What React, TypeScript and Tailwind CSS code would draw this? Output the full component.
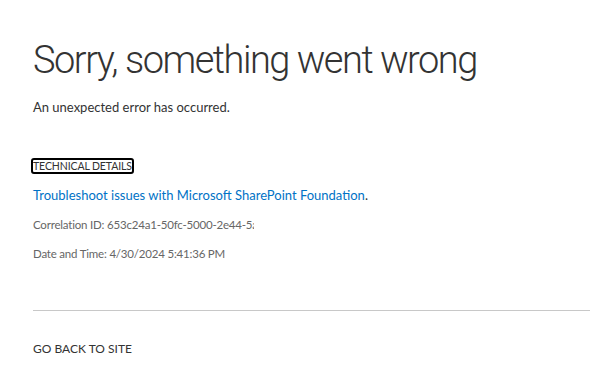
import React from 'react';

const Details = () => (
  <div className="mt-[40px] text-[13px]">
    <div className="flex">
      <span className="border-2 border-black rounded-[3px] leading-[12px] h-[16px] text-[10.5px] text-[#333] -ml-[2px] tracking-[-0.1px]">
        TECHNICAL DETAILS
      </span>
    </div>
    <p className="mt-[12px] text-[#0072c6]">
      Troubleshoot issues with Microsoft SharePoint Foundation<span className="text-[#333]">.</span>
    </p>
    <p className="mt-[11px] text-[11.5px] text-[#666] w-[221px] overflow-hidden whitespace-nowrap tracking-[-0.2px]">
      Correlation ID: 653c24a1-50fc-5000-2e44-5a7a1b3c9d0e
    </p>
    <p className="mt-[12px] text-[11.5px] text-[#666] tracking-[-0.2px]">Date and Time: 4/30/2024 5:41:36 PM</p>
  </div>
);

export default function App() {
  return (
    <div className="w-[590px] h-[392px] bg-white overflow-hidden pl-[33px] pt-[37px]" style={{ fontFamily: 'Lato, Arial, sans-serif' }}>
      <h1
        className="text-[38px] font-light text-[#333] leading-[46px] tracking-[-1.5px]"
        style={{ fontFamily: 'Roboto, Arial, sans-serif' }}
      >
        Sorry, something went wrong
      </h1>
      <p className="mt-[15px] text-[13px] text-[#333]">An unexpected error has occurred.</p>
      <Details />
      <hr className="mt-[47px] border-t border-[#c8c8c8]" />
      <p className="mt-[29px] text-[12px] text-[#333]">GO BACK TO SITE</p>
    </div>
  );
}
